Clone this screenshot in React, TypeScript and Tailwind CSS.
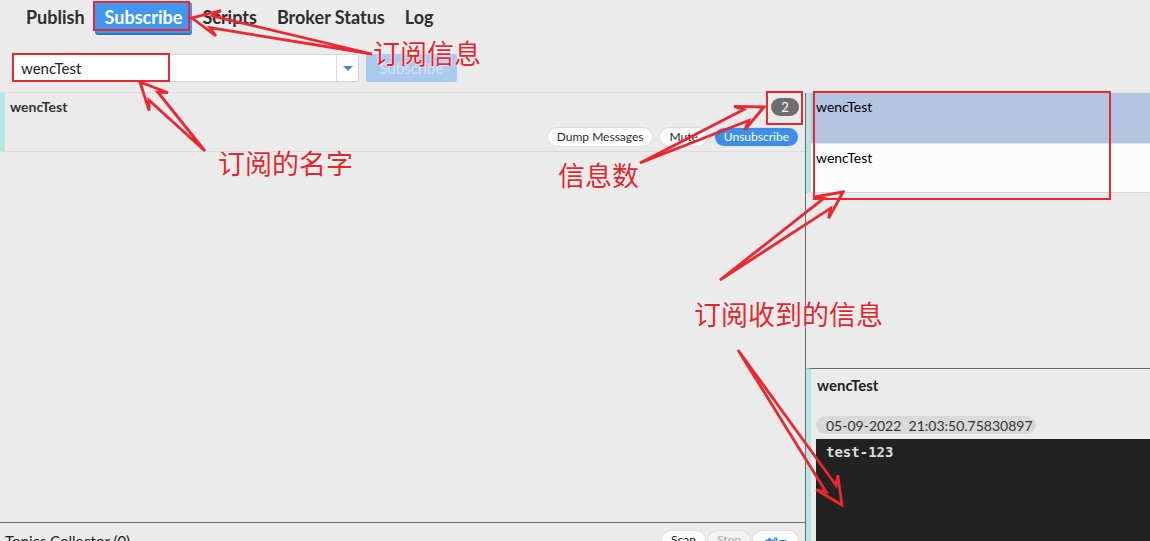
import clsx from "clsx";
import React from "react";
import { FaCogs } from "react-icons/fa";

type Pt = [number, number];

const tabs = ["Publish", "Subscribe", "Scripts", "Broker Status", "Log"];

const arrows: { tip: Pt; tail: Pt }[] = [
   { tip: [192, 18], tail: [372, 54] },
   { tip: [140, 82], tail: [205, 151] },
   { tip: [764, 107], tail: [640, 163] },
   { tip: [843, 192], tail: [720, 280] },
   { tip: [842, 505], tail: [738, 350] },
];

function arrowPoints(tip: Pt, tail: Pt): string {
   const dx = tail[0] - tip[0];
   const dy = tail[1] - tip[1];
   const len = Math.hypot(dx, dy);
   const ux = dx / len;
   const uy = dy / len;
   const nx = -uy;
   const ny = ux;
   const head = 27;
   const half = 13;
   const shaft = 6;
   const p = (a: number, b: number): string =>
      `${(tip[0] + ux * a + nx * b).toFixed(1)},${(tip[1] + uy * a + ny * b).toFixed(1)}`;
   return [
      p(0, 0),
      p(head, half),
      p(head * 0.72, shaft),
      `${tail[0]},${tail[1]}`,
      p(head * 0.72, -shaft),
      p(head, -half),
   ].join(" ");
}

const labels = [
   { text: "订阅信息", left: "left-[373px]", top: "top-[37px]" },
   { text: "订阅的名字", left: "left-[218px]", top: "top-[147px]" },
   { text: "信息数", left: "left-[558px]", top: "top-[159px]" },
   { text: "订阅收到的信息", left: "left-[694px]", top: "top-[298px]" },
];

function Pill({ children, className }: { children: React.ReactNode; className?: string }) {
   return (
      <div
         className={clsx(
            "h-[18px] rounded-full px-[9px] text-[12px] leading-[18px] shadow-[0_0_0_1px_#dedede]",
            className
         )}
      >
         {children}
      </div>
   );
}

export default function App(): JSX.Element {
   return (
      <div className="relative h-[541px] w-[1150px] overflow-hidden bg-[#ebebeb] font-['Lato','Noto_Sans',sans-serif] text-[#2b2b2b]">
         {/* header */}
         <div className="h-[93px] border-b border-[#e0e0e0]">
            <nav className="flex h-[36px] pl-[16px] pt-[2px]">
               {tabs.map((t) => (
                  <div
                     key={t}
                     className={clsx(
                        "flex h-[31px] items-center rounded-[3px] px-[10px] text-[18px] font-bold",
                        t === "Subscribe"
                           ? "bg-[#3f97f2] text-white shadow-[0_2px_0_#2c74c4]"
                           : "text-[#2e2e2e]"
                     )}
                  >
                     {t}
                  </div>
               ))}
            </nav>
            <div className="ml-[12px] mt-[18px] flex gap-[7px]">
               <div className="flex h-[28px] w-[347px] rounded-[3px] border border-[#d3d3d3] bg-white">
                  <div className="flex flex-1 items-center pl-[8px] text-[15px] text-[#222]">wencTest</div>
                  <div className="flex w-[22px] items-center justify-center border-l border-[#dcdcdc]">
                     <div className="h-0 w-0 border-x-[5px] border-t-[5px] border-x-transparent border-t-[#3f8fe0]" />
                  </div>
               </div>
               <div className="flex h-[28px] w-[91px] items-center justify-center rounded-[3px] bg-[#a9c9ee] text-[15px] text-[#d6e5f7]">
                  Subscribe
               </div>
            </div>
         </div>

         {/* body */}
         <div className="flex h-[448px]">
            <div className="flex w-[806px] flex-col border-r border-[#6a6a6a]">
               <div className="flex h-[59px] flex-col border-b border-l-[5px] border-b-[#dcdcdc] border-l-[#b3e6e5] pl-[5px] pr-[6px] pt-[5px]">
                  <div className="flex items-start justify-between">
                     <div className="text-[14px] font-bold leading-[18px] text-[#333]">wencTest</div>
                     <div className="h-[18px] w-[28px] rounded-full bg-[#6e6e6e] text-center text-[13px] leading-[18px] text-white">
                        2
                     </div>
                  </div>
                  <div className="mt-[12px] flex justify-end gap-[8px] pr-[1px]">
                     <Pill className="bg-white">Dump Messages</Pill>
                     <Pill className="bg-white">Mute</Pill>
                     <Pill className="bg-[#3b8fe6] text-white shadow-[0_0_0_1px_#3582d4]">Unsubscribe</Pill>
                  </div>
               </div>
               <div className="flex-1" />
               <div className="h-[19px] border-t border-[#6a6a6a]">
                  <div className="flex justify-between pl-[5px] pr-[7px] pt-[8px]">
                     <div className="text-[15px] leading-[20px] text-[#222]">Topics Collector (0)</div>
                     <div className="flex gap-[3px]">
                        <Pill className="bg-white text-[#111]">Scan</Pill>
                        <Pill className="bg-[#f2f2f2] text-[#a8a8a8]">Stop</Pill>
                        <Pill className="flex w-[45px] items-center justify-center bg-white text-[#3c8de0]">
                           <FaCogs className="mt-[4px] h-[13px] w-[13px]" />
                           <span className="ml-[1px] mt-[4px] h-0 w-0 border-x-[4px] border-t-[5px] border-x-transparent border-t-[#3c8de0]" />
                        </Pill>
                     </div>
                  </div>
               </div>
            </div>

            <div className="flex flex-1 flex-col">
               <div className="border-b border-l-[5px] border-b-[#d6d6d6] border-l-[#b3e6e5]">
                  <div className="h-[50px] bg-[#b3c5e1] pl-[5px] pt-[3px] text-[14px] text-black">wencTest</div>
                  <div className="h-[49px] border-t border-[#e4e4e4] bg-[#fcfcfc] pl-[5px] pt-[3px] text-[14px] text-black">
                     wencTest
                  </div>
               </div>
               <div className="flex-1" />
               <div className="h-[173px] border-t border-l-[5px] border-t-[#6a6a6a] border-l-[#b3e6e5] pl-[5px]">
                  <div className="pl-[1px] pt-[6px] text-[15px] font-bold leading-[20px] text-[#222]">wencTest</div>
                  <div className="mt-[21px] flex h-[18px] w-[220px] items-center rounded-full bg-[#d9d9d9] pl-[10px] text-[14px] text-[#333]">
                     05-09-2022&nbsp;&nbsp;21:03:50.75830897
                  </div>
                  <div className="mt-[5px] h-[110px] bg-[#222] pl-[10px] pt-[3px] font-['DejaVu_Sans_Mono',monospace] text-[14px] font-bold text-[#dcdcdc]">
                     test-123
                  </div>
               </div>
            </div>
         </div>

         {/* annotations */}
         <svg className="pointer-events-none absolute left-0 top-0" width="1150" height="541">
            <rect x="94" y="2" width="95" height="28" fill="none" stroke="#ec2730" strokeWidth="2" />
            <rect x="13" y="54" width="156" height="27" fill="none" stroke="#ec2730" strokeWidth="2" />
            <rect x="767" y="92" width="35" height="32" fill="none" stroke="#ec2730" strokeWidth="2" />
            <rect x="814" y="92" width="296" height="107" fill="none" stroke="#ec2730" strokeWidth="2" />
            {arrows.map((a, i) => (
               <polygon
                  key={i}
                  points={arrowPoints(a.tip, a.tail)}
                  fill="none"
                  stroke="#ec2730"
                  strokeWidth="2.8"
                  strokeLinejoin="miter"
               />
            ))}
         </svg>
         {labels.map((l) => (
            <div
               key={l.text}
               className={clsx(
                  "pointer-events-none absolute font-['Noto_Sans_CJK_SC',sans-serif] text-[27px] leading-[32px] text-[#ee2129] [text-shadow:0_0_2px_#fff,0_0_2px_#fff]",
                  l.left,
                  l.top
               )}
            >
               {l.text}
            </div>
         ))}
      </div>
   );
}
